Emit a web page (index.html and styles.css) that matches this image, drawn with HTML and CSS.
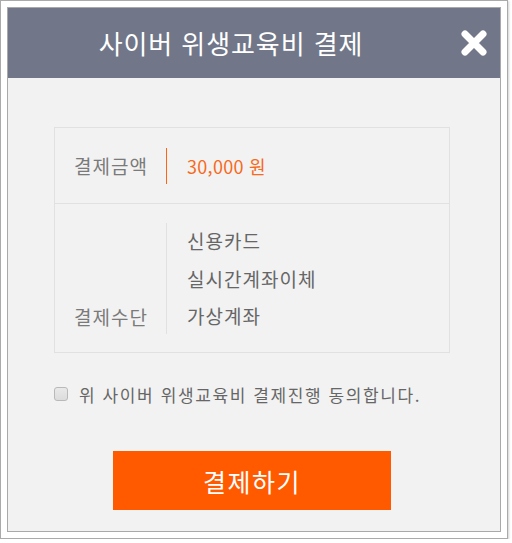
FILE: index.html
```html
<!DOCTYPE html>
<html lang="ko">
<head>
<meta charset="utf-8">
<title>사이버 위생교육비 결제</title>
<link rel="stylesheet" href="styles.css">
</head>
<body>
<div class="frame">
  <div class="popup">
    <div class="header">
      <h1 class="title">사이버 위생교육비 결제</h1>
      <button class="close" type="button" aria-label="닫기">
        <svg width="28" height="26" viewBox="0 0 28 26">
          <path d="M5 4 L23 22 M23 4 L5 22" stroke="#fff" stroke-width="7" stroke-linecap="round" fill="none"/>
        </svg>
      </button>
    </div>
    <div class="content">
      <div class="info">
        <div class="row row-amount">
          <div class="label">결제금액</div>
          <div class="value amount">30,000 원</div>
        </div>
        <div class="row row-method">
          <div class="label label-bottom">결제수단</div>
          <div class="value methods">
            <div class="method">신용카드</div>
            <div class="method">실시간계좌이체</div>
            <div class="method">가상계좌</div>
          </div>
        </div>
      </div>
      <label class="agree">
        <input type="checkbox" class="check">
        <span>위 사이버 위생교육비 결제진행 동의합니다.</span>
      </label>
      <div class="actions">
        <button class="pay" type="button">결제하기</button>
      </div>
    </div>
  </div>
</div>
</body>
</html>
```
FILE: styles.css
```css
* { box-sizing: border-box; }
html, body { margin: 0; padding: 0; background: #fff; }
body {
  font-family: "Noto Sans CJK KR", "Noto Sans", sans-serif;
}
.frame {
  width: 508px;
  height: 539px;
  border: 1px solid #aaaaaa;
  padding: 6px;
  box-shadow: 1px 1px 2px rgba(0,0,0,0.18);
  background: #fff;
}
.popup {
  width: 494px;
  height: 525px;
  border: 1px solid #a9a9a9;
  background: #f2f2f2;
  display: flex;
  flex-direction: column;
}
.header {
  height: 70px;
  background: #717788;
  display: flex;
  align-items: center;
  justify-content: center;
  padding-right: 46px;
  position: relative;
}
.title {
  margin: 0;
  color: #fff;
  font-weight: 400;
  font-size: 26px;
  letter-spacing: 0.9px;
  line-height: 1;
}
.close {
  position: absolute;
  right: 12px;
  top: 22px;
  padding: 0;
  margin: 0;
  border: 0;
  background: none;
  width: 28px;
  height: 26px;
  display: block;
}
.close svg { display: block; }
.content {
  padding: 49px 50px 0 46px;
  display: flex;
  flex-direction: column;
}
.info {
  border: 1px solid #e1e1e1;
  background: #f2f2f2;
}
.row {
  display: flex;
  color: #777;
  font-size: 19px;
}
.row-amount {
  height: 76px;
  align-items: center;
  border-bottom: 1px solid #e1e1e1;
}
.row-method {
  height: 148px;
  align-items: stretch;
  padding: 19px 0 18px;
}
.label {
  width: 111px;
  padding-left: 19px;
  color: #7a7a7a;
  letter-spacing: 1px;
}
.row-amount .label { line-height: 36px; }
.label-bottom {
  display: flex;
  align-items: flex-end;
  padding-bottom: 4px;
}
.value {
  padding-left: 20px;
}
.amount {
  border-left: 1px solid #ff6414;
  color: #f66a20;
  font-size: 18px;
  line-height: 36px;
  letter-spacing: 0.3px;
}
.methods {
  border-left: 1px solid #e1e1e1;
  color: #666;
  display: flex;
  flex-direction: column;
  justify-content: space-between;
  padding-top: 0;
  letter-spacing: 1px;
}
.method { line-height: 36px; }
.agree {
  margin-top: 28px;
  display: flex;
  align-items: center;
  font-size: 17px;
  color: #666;
  letter-spacing: 1.6px;
  height: 26px;
}
.check {
  appearance: none;
  -webkit-appearance: none;
  margin: 0 11px 0 0;
  width: 14px;
  height: 14px;
  border: 1px solid #b9b9b9;
  border-radius: 3px;
  background: linear-gradient(#e9e9e9, #dcdcdc);
  flex: none;
}
.actions {
  display: flex;
  justify-content: center;
  margin-top: 44px;
}
.pay {
  width: 278px;
  height: 59px;
  border: 0;
  background: #ff5a00;
  color: #fff;
  font-family: "Noto Sans CJK KR", "Noto Sans", sans-serif;
  font-size: 25px;
  letter-spacing: 1.5px;
  padding: 0;
}
```
